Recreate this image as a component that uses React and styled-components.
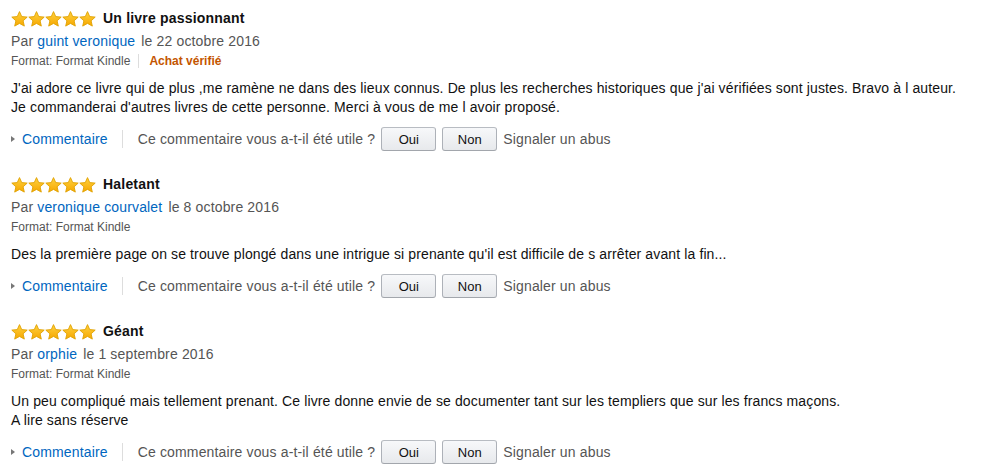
import React from "react";
import styled, { createGlobalStyle } from "styled-components";

const Global = createGlobalStyle`
  html, body { margin: 0; padding: 0; background: #fff; }
  body { font-family: "Liberation Sans", Arial, sans-serif; color: #111; }
`;

const Page = styled.div`
  padding: 9px 0 0 11px;
  display: flex;
  flex-direction: column;
`;

const Review = styled.section`
  display: flex;
  flex-direction: column;
  margin-bottom: 24px;
`;

const TitleRow = styled.div`
  display: flex;
  align-items: center;
  height: 19px;
  gap: 7px;
`;

const Stars = styled.div`
  display: flex;
  height: 16px;
`;

const Title = styled.span`
  font-size: 14px;
  letter-spacing: 0.2px;
  font-weight: bold;
  line-height: 19px;
  color: #111;
`;

const Byline = styled.div`
  margin-top: 4px;
  font-size: 14px;
  letter-spacing: 0.15px;
  line-height: 19px;
  color: #555;
`;

const Link = styled.a`
  color: #0066c0;
  text-decoration: none;
  margin: ${(p) => p.$margin || "0"};
`;

const FormatRow = styled.div`
  display: flex;
  align-items: center;
  font-size: 12px;
  line-height: 20px;
  color: #555;
`;

const Divider = styled.span`
  display: inline-block;
  width: 1px;
  height: ${(p) => p.$h || 14}px;
  background: #ddd;
  margin: 0 ${(p) => p.$mr || 10}px 0 ${(p) => p.$ml || 8}px;
`;

const Verified = styled.span`
  color: #c45500;
  font-weight: bold;
`;

const Body = styled.p`
  margin: 8px 0 0;
  font-size: 14px;
  letter-spacing: 0.12px;
  line-height: 19px;
  color: #111;
`;

const Actions = styled.div`
  margin-top: 10px;
  height: 24px;
  display: flex;
  align-items: center;
  font-size: 14px;
  letter-spacing: 0.15px;
  color: #555;
`;

const Caret = styled.span`
  display: inline-block;
  width: 0;
  height: 0;
  border-top: 3.5px solid transparent;
  border-bottom: 3.5px solid transparent;
  border-left: 4px solid #777;
  margin-right: 7px;
`;

const Question = styled.span`
  margin-right: 6px;
`;

const VoteButton = styled.button`
  box-sizing: border-box;
  width: 55px;
  height: 24px;
  margin-right: 6px;
  padding: 0;
  border: 1px solid #adb1b8;
  border-top-color: #b8bcc2;
  border-bottom-color: #a2a6ac;
  border-radius: 3px;
  background: linear-gradient(to bottom, #f7f8fa, #e7e9ec);
  font-family: "Liberation Sans", Arial, sans-serif;
  font-size: 13px;
  color: #111;
  cursor: pointer;
`;

const StarIcon = () => (
  <svg width="17" height="16" viewBox="0 0 17 16">
    <defs>
      <linearGradient id="sg" x1="0" y1="0" x2="0" y2="1">
        <stop offset="0" stopColor="#ffd23f" />
        <stop offset="1" stopColor="#f6a700" />
      </linearGradient>
    </defs>
    <path
      d="M8.5 0.6 L10.73 5.6 L16.2 6.1 L12.11 9.8 L13.3 15.1 L8.5 12.4 L3.7 15.1 L4.89 9.8 L0.8 6.1 L6.27 5.6 Z"
      fill="url(#sg)"
      stroke="#e0a100"
      strokeWidth="0.9"
      strokeLinejoin="round"
    />
  </svg>
);

const reviews = [
  {
    title: "Un livre passionnant",
    author: "guint veronique",
    date: "le 22 octobre 2016",
    verified: true,
    body: [
      "J'ai adore ce livre qui de plus ,me ramène ne dans des lieux connus. De plus les recherches historiques que j'ai vérifiées sont justes. Bravo à l auteur.",
      "Je commanderai d'autres livres de cette personne. Merci à vous de me l avoir proposé.",
    ],
  },
  {
    title: "Haletant",
    author: "veronique courvalet",
    date: "le 8 octobre 2016",
    verified: false,
    body: [
      "Des la première page on se trouve plongé dans une intrigue si prenante qu'il est difficile de s arrêter avant la fin...",
    ],
  },
  {
    title: "Géant",
    author: "orphie",
    date: "le 1 septembre 2016",
    verified: false,
    body: [
      "Un peu compliqué mais tellement prenant. Ce livre donne envie de se documenter tant sur les templiers que sur les francs maçons.",
      "A lire sans réserve",
    ],
  },
];

export default function App() {
  return (
    <>
      <Global />
      <Page>
        {reviews.map((r) => (
          <Review key={r.title}>
            <TitleRow>
              <Stars>
                {[0, 1, 2, 3, 4].map((i) => (
                  <StarIcon key={i} />
                ))}
              </Stars>
              <Title>{r.title}</Title>
            </TitleRow>
            <Byline>
              Par <Link href="#" $margin="0 2px 0 0">{r.author}</Link> {r.date}
            </Byline>
            <FormatRow>
              Format: Format Kindle
              {r.verified && (
                <>
                  <Divider />
                  <Verified>Achat vérifié</Verified>
                </>
              )}
            </FormatRow>
            <Body>
              {r.body.map((line, i) => (
                <React.Fragment key={i}>
                  {i > 0 && <br />}
                  {line}
                </React.Fragment>
              ))}
            </Body>
            <Actions>
              <Caret />
              <Link href="#">Commentaire</Link>
              <Divider $h={18} $ml={14} $mr={15} />
              <Question>Ce commentaire vous a-t-il été utile ?</Question>
              <VoteButton>Oui</VoteButton>
              <VoteButton>Non</VoteButton>
              <span>Signaler un abus</span>
            </Actions>
          </Review>
        ))}
      </Page>
    </>
  );
}
